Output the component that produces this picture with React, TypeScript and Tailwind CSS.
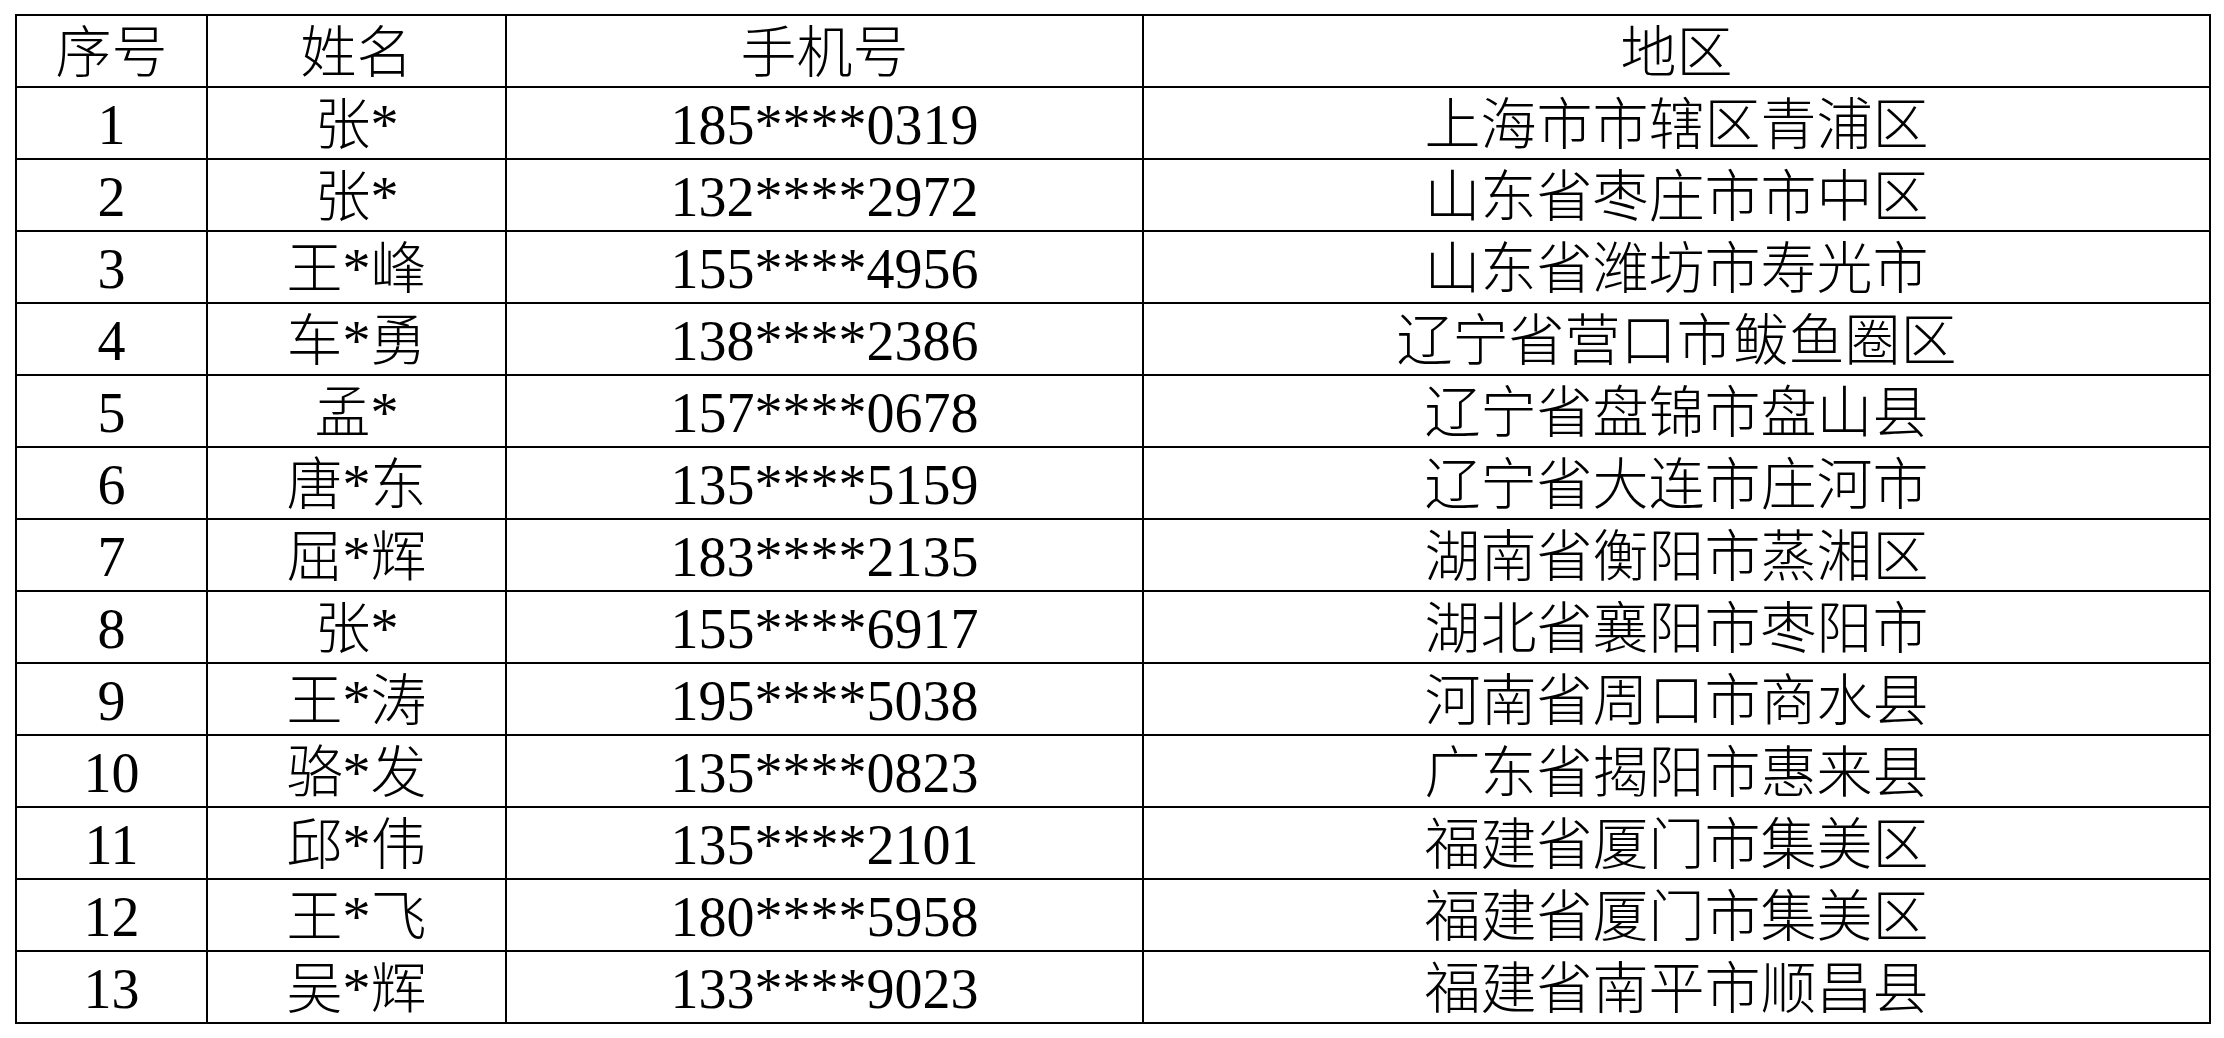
const rows = [
  ['1', '张*', '185****0319', '上海市市辖区青浦区'],
  ['2', '张*', '132****2972', '山东省枣庄市市中区'],
  ['3', '王*峰', '155****4956', '山东省潍坊市寿光市'],
  ['4', '车*勇', '138****2386', '辽宁省营口市鲅鱼圈区'],
  ['5', '孟*', '157****0678', '辽宁省盘锦市盘山县'],
  ['6', '唐*东', '135****5159', '辽宁省大连市庄河市'],
  ['7', '屈*辉', '183****2135', '湖南省衡阳市蒸湘区'],
  ['8', '张*', '155****6917', '湖北省襄阳市枣阳市'],
  ['9', '王*涛', '195****5038', '河南省周口市商水县'],
  ['10', '骆*发', '135****0823', '广东省揭阳市惠来县'],
  ['11', '邱*伟', '135****2101', '福建省厦门市集美区'],
  ['12', '王*飞', '180****5958', '福建省厦门市集美区'],
  ['13', '吴*辉', '133****9023', '福建省南平市顺昌县'],
];

const cell = 'h-[72px] border-2 border-black px-0 pb-0 pt-[3px] text-center align-middle text-[56px] font-light leading-none';

export default function App() {
  return (
    <div
      className="min-h-screen bg-white pl-[15px] pt-[14px] text-black"
      style={{ fontFamily: '"Liberation Serif", "Noto Sans CJK SC", serif' }}
    >
      <table className="w-[2194px] table-fixed border-collapse">
        <colgroup>
          <col className="w-[191px]" />
          <col className="w-[299px]" />
          <col className="w-[637px]" />
          <col className="w-[1067px]" />
        </colgroup>
        <thead>
          <tr>
            <th className={cell}>序号</th>
            <th className={cell}>姓名</th>
            <th className={cell}>手机号</th>
            <th className={cell}>地区</th>
          </tr>
        </thead>
        <tbody>
          {rows.map(([no, name, phone, area]) => (
            <tr key={no}>
              <td className={cell}>{no}</td>
              <td className={cell}>{name}</td>
              <td className={cell}>{phone}</td>
              <td className={cell}>{area}</td>
            </tr>
          ))}
        </tbody>
      </table>
    </div>
  );
}
